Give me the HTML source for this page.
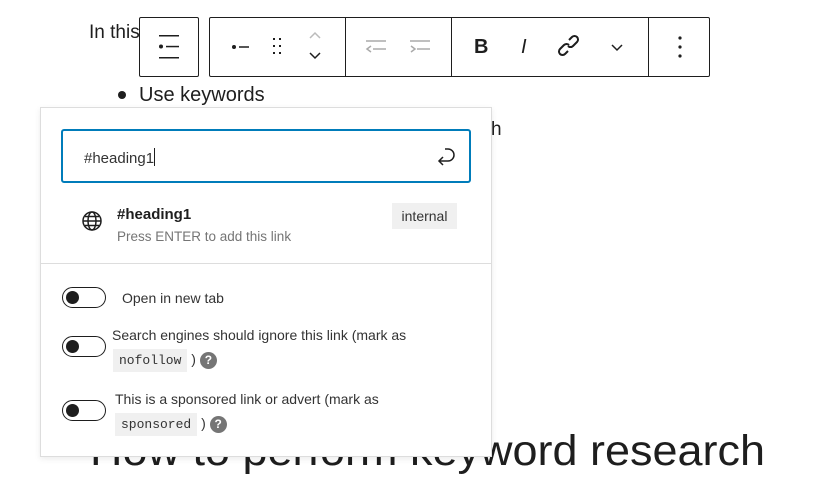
<!DOCTYPE html>
<html><head><meta charset="utf-8"><style>
*{box-sizing:border-box;margin:0;padding:0}
body{width:821px;height:493px;background:#fff;position:relative;overflow:hidden;font-family:"Liberation Sans",sans-serif;color:#1e1e1e}
.a{position:absolute}
.tb{position:absolute;border:1px solid #1e1e1e;border-radius:2px;background:#fff;height:60px;top:17px}
.div{position:absolute;top:0;width:1px;height:58px;background:#1e1e1e}
.pop{position:absolute;left:40px;top:107px;width:452px;height:350px;background:#fff;border:1px solid #ddd;box-shadow:0 2px 6px rgba(0,0,0,.08)}
.tog{position:absolute;width:44px;height:21px;border:1.5px solid #1e1e1e;border-radius:11px;background:#fff}
.tog:after{content:"";position:absolute;left:3px;top:2.5px;width:13px;height:13px;border-radius:50%;background:#1e1e1e}
.lbl{position:absolute;font-size:14px;color:#333;line-height:22px}
.code{font-family:"Liberation Mono",monospace;font-size:13px;background:#f0f0f0;padding:4px 6px;color:#333}
.q{display:inline-block;width:17px;height:17px;border-radius:50%;background:#757575;color:#fff;font-size:12px;font-weight:bold;text-align:center;line-height:17px;vertical-align:middle}
</style></head><body>
<div class="a" style="left:89px;top:22px;font-size:19px;color:#1e1e1e">In this&nbsp;&nbsp;&nbsp;&nbsp;&nbsp;&nbsp;&nbsp;&nbsp;&nbsp;&nbsp;&nbsp;&nbsp;&nbsp;&nbsp;w</div>
<div class="a" style="left:118px;top:91px;width:8px;height:8px;border-radius:50%;background:#1e1e1e"></div>
<div class="a" style="left:139px;top:84px;font-size:20px">Use keywords</div>
<div class="a" style="left:491px;top:119px;font-size:19px">h</div>
<svg class="a" style="left:0;top:405px" width="821" height="88"><text x="90" y="60" font-family="Liberation Sans" font-size="43" textLength="675" lengthAdjust="spacingAndGlyphs" fill="#1e1e1e">How to perform keyword research</text></svg>

<div class="tb" style="left:139px;width:60px">
<svg class="a" style="left:0;top:0" width="58" height="58" fill="#1e1e1e"><rect x="19" y="17" width="20" height="1.5"/><circle cx="21" cy="28.5" r="2"/><rect x="26" y="27.8" width="13" height="1.5"/><rect x="19" y="39" width="20" height="1.5"/></svg>
</div>
<div class="tb" style="left:209px;width:501px">
<svg class="a" style="left:0;top:0" width="500" height="58" fill="none" stroke="#1e1e1e" stroke-width="1.5">
<circle cx="24" cy="29" r="2" fill="#1e1e1e" stroke="none"/><line x1="29" y1="29" x2="39" y2="29"/>
<g fill="#1e1e1e" stroke="none"><rect x="63" y="20" width="2" height="2"/><rect x="69" y="20" width="2" height="2"/><rect x="63" y="27" width="2" height="2"/><rect x="69" y="27" width="2" height="2"/><rect x="63" y="34" width="2" height="2"/><rect x="69" y="34" width="2" height="2"/></g>
<path d="M100 20l5-5 5 5" stroke="#bbb"/><path d="M100 35l5 5 5-5"/>
<g stroke="#aaa"><line x1="156" y1="23" x2="176" y2="23"/><path d="M161 28l-4 3 4 3"/><line x1="163" y1="31" x2="176" y2="31"/>
<line x1="200" y1="23" x2="220" y2="23"/><path d="M201 28l4 3-4 3"/><line x1="207" y1="31" x2="220" y2="31"/></g>
<path d="M402 27l5 5 5-5"/>
<g fill="#1e1e1e" stroke="none"><circle cx="470" cy="20" r="1.6"/><circle cx="470" cy="29" r="1.6"/><circle cx="470" cy="38" r="1.6"/></g>
<g stroke-width="2"><path d="M358 33l-3 3a3.5 3.5 0 0 1-5-5l4-4a3.5 3.5 0 0 1 5 0"/><path d="M359 22l3-3a3.5 3.5 0 0 1 5 5l-4 4a3.5 3.5 0 0 1-5 0"/></g>
</svg>
<div class="div" style="left:135px"></div><div class="div" style="left:241px"></div><div class="div" style="left:438px"></div>
<div class="a" style="left:264px;top:18px;font-size:20px;font-weight:bold">B</div>
<div class="a" style="left:311px;top:18px;font-size:20px;font-style:italic">I</div>
</div>

<div class="pop">
<div class="a" style="left:20px;top:21px;width:410px;height:54px;border:2px solid #007cba;border-radius:3px"></div>
<div class="a" style="left:43px;top:40px;font-size:15px;color:#333">#heading1<span style="display:inline-block;width:1px;height:18px;background:#1e1e1e;vertical-align:-3px"></span></div>
<svg class="a" style="left:394px;top:37px" width="26" height="26" fill="none" stroke="#1e1e1e" stroke-width="1.5"><path d="M10 4h3a6 6 0 0 1 0 12H4"/><path d="M8 12l-4 4 4 4"/></svg>
<svg class="a" style="left:40px;top:102px" width="22" height="22" fill="none" stroke="#1e1e1e" stroke-width="1.5"><circle cx="11" cy="11" r="9"/><ellipse cx="11" cy="11" rx="4" ry="9"/><line x1="2" y1="11" x2="20" y2="11"/><line x1="4" y1="6.5" x2="18" y2="6.5"/><line x1="4" y1="15.5" x2="18" y2="15.5"/></svg>
<div class="a" style="left:76px;top:98px;font-size:15px;font-weight:bold">#heading1</div>
<div class="a" style="left:76px;top:121px;font-size:13.5px;color:#757575">Press ENTER to add this link</div>
<div class="a" style="left:351px;top:95px;width:65px;height:26px;background:#f0f0f0;font-size:14px;line-height:26px;text-align:center;color:#333">internal</div>
<div class="a" style="left:0;top:155px;width:450px;height:1px;background:#ddd"></div>
<div class="tog" style="left:21px;top:179px"></div>
<div class="lbl" style="left:81px;top:179px">Open in new tab</div>
<div class="tog" style="left:21px;top:228px"></div>
<div class="lbl" style="left:71px;top:216px">Search engines should ignore this link (mark as</div>
<div class="lbl" style="left:72px;top:240px"><span class="code">nofollow</span> ) <span class="q">?</span></div>
<div class="tog" style="left:21px;top:292px"></div>
<div class="lbl" style="left:74px;top:280px">This is a sponsored link or advert (mark as</div>
<div class="lbl" style="left:74px;top:304px"><span class="code">sponsored</span> ) <span class="q">?</span></div>
</div>
</body></html>
